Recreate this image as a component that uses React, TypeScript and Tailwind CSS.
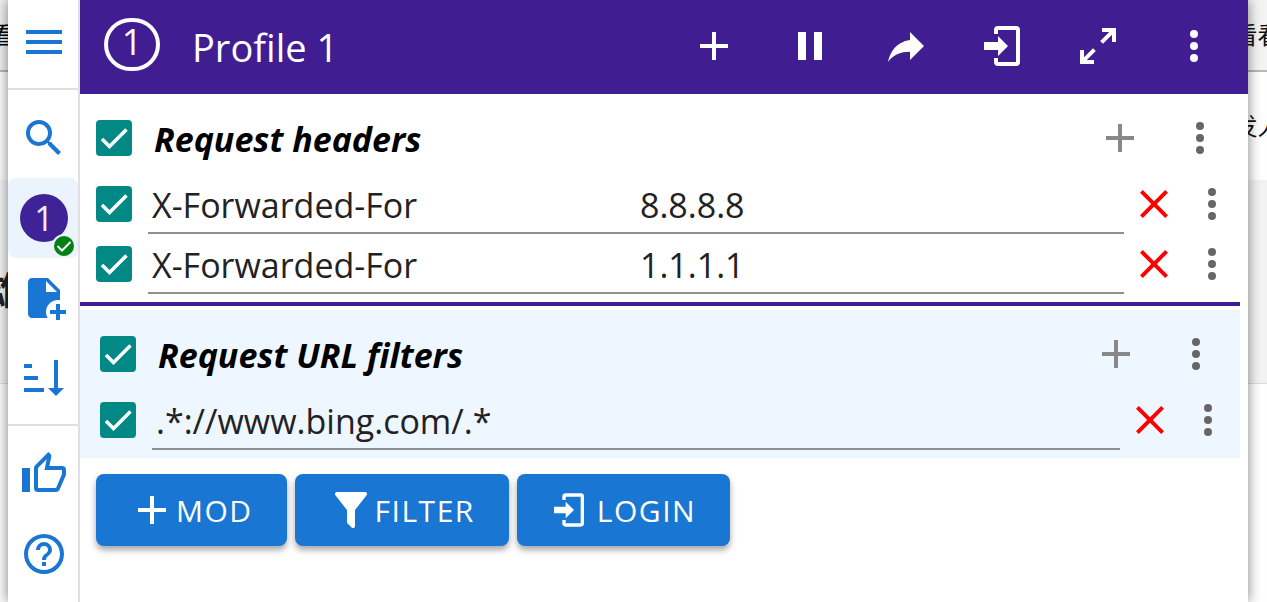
import { useState, type ReactNode } from "react";

const ICONS = {
  menu: "M3 18h18v-2H3v2zm0-5h18v-2H3v2zm0-7v2h18V6H3z",
  search:
    "M9.5 3A6.5 6.5 0 0 1 16 9.5c0 1.61-.59 3.09-1.56 4.23l.27.27h.79l5 5-1.5 1.5-5-5v-.79l-.27-.27A6.516 6.516 0 0 1 9.5 16 6.5 6.5 0 0 1 3 9.5 6.5 6.5 0 0 1 9.5 3m0 2C7 5 5 7 5 9.5S7 14 9.5 14 14 12 14 9.5 12 5 9.5 5z",
  filePlus:
    "M14 2H6c-1.11 0-2 .89-2 2v16c0 1.11.89 2 2 2h7.81c-.53-.91-.81-1.95-.81-3 0-3.31 2.69-6 6-6 .34 0 .67.03 1 .08V8l-6-6m-1 7V3.5L18.5 9H13m10 11h-3v3h-2v-3h-3v-2h3v-3h2v3h3v2z",
  sort: "M19 17h3l-4 4-4-4h3V3h2v14M2 17h10v2H2v-2m4-12v2H2V5h4m-4 6h7v2H2v-2z",
  thumb:
    "M5 9v12H1V9h4m4 12a2 2 0 0 1-2-2V9c0-.55.22-1.05.59-1.41L14.17 1l1.06 1.06c.27.27.44.64.44 1.05l-.03.32L14.69 8H21a2 2 0 0 1 2 2v2c0 .26-.05.5-.14.73l-3.02 7.05C19.54 20.5 18.83 21 18 21H9m0-2h9.03L21 12v-2h-8.79l1.13-5.32L9 9.03V19z",
  help: "M11 18h2v-2h-2v2m1-16A10 10 0 0 0 2 12a10 10 0 0 0 10 10 10 10 0 0 0 10-10A10 10 0 0 0 12 2m0 18c-4.41 0-8-3.59-8-8s3.59-8 8-8 8 3.59 8 8-3.59 8-8 8m0-14a4 4 0 0 0-4 4h2a2 2 0 0 1 2-2 2 2 0 0 1 2 2c0 2-3 1.75-3 5h2c0-2.25 3-2.5 3-5a4 4 0 0 0-4-4z",
  plus: "M19 13h-6v6h-2v-6H5v-2h6V5h2v6h6v2z",
  pause: "M14 19h4V5h-4M6 19h4V5H6v14z",
  share: "M21 12l-7-7v4C7 10 4 15 3 20c2.5-3.5 6-5.1 11-5.1V19l7-7z",
  login:
    "M19 2H10a2 2 0 0 0-2 2v2h2V4h9v16h-9v-2H8v2a2 2 0 0 0 2 2h9a2 2 0 0 0 2-2V4a2 2 0 0 0-2-2zM10 7v3H3v4h7v3l5-5z",
  expand:
    "M10 21v-2H6.41l4.5-4.5-1.41-1.41-4.5 4.5V14H3v7h7m4.5-10.09l4.5-4.5V10h2V3h-7v2h3.59l-4.5 4.5 1.41 1.41z",
  dots: "M12 16a2 2 0 0 1 2 2 2 2 0 0 1-2 2 2 2 0 0 1-2-2 2 2 0 0 1 2-2m0-6a2 2 0 0 1 2 2 2 2 0 0 1-2 2 2 2 0 0 1-2-2 2 2 0 0 1 2-2m0-6a2 2 0 0 1 2 2 2 2 0 0 1-2 2 2 2 0 0 1-2-2 2 2 0 0 1 2-2z",
  close:
    "M19 6.41L17.59 5 12 10.59 6.41 5 5 6.41 10.59 12 5 17.59 6.41 19 12 13.41 17.59 19 19 17.59 13.41 12 19 6.41z",
  filter:
    "M14 12v7.88c.04.3-.06.62-.29.83a.996.996 0 0 1-1.41 0l-2.01-2.01a.989.989 0 0 1-.29-.83V12h-.03L4.21 4.62a1 1 0 0 1 .17-1.4c.19-.14.4-.22.62-.22h14c.22 0 .43.08.62.22a1 1 0 0 1 .17 1.4L14.03 12H14z",
};

function Icon({ d, className = "size-12" }: { d: string; className?: string }) {
  return (
    <svg viewBox="0 0 24 24" fill="currentColor" aria-hidden="true" className={`shrink-0 ${className}`}>
      <path d={d} />
    </svg>
  );
}

function IconButton({ label, d, className = "" }: { label: string; d: string; className?: string }) {
  return (
    <button type="button" aria-label={label} className={`flex shrink-0 items-center justify-center ${className}`}>
      <Icon d={d} />
    </button>
  );
}

function Check({ label }: { label: string }) {
  const [on, setOn] = useState(true);
  return (
    <label className="grid size-9 shrink-0 cursor-pointer place-items-center rounded bg-[#028986] text-white">
      <input
        type="checkbox"
        aria-label={label}
        checked={on}
        onChange={() => setOn(!on)}
        className="col-start-1 row-start-1 size-9 appearance-none rounded"
      />
      {on && (
        <svg viewBox="0 0 36 36" fill="none" aria-hidden="true" className="pointer-events-none col-start-1 row-start-1 size-9">
          <path d="M6 19l7.500 7.500L30.500 9.500" stroke="currentColor" strokeWidth="3.500" />
        </svg>
      )}
    </label>
  );
}

function SectionHead({ title }: { title: string }) {
  return (
    <div className="flex h-18 items-center">
      <Check label={title} />
      <h2 className="ml-[22px] flex-1 pt-0.5 text-[34px] leading-10 font-bold text-black italic">{title}</h2>
      <IconButton label={`Add to ${title}`} d={ICONS.plus} className="w-20 text-[#888]" />
      <IconButton label={`${title} menu`} d={ICONS.dots} className="w-20 text-[#666]" />
    </div>
  );
}

function Row({ label, values }: { label: string; values: string[] }) {
  return (
    <div className="flex h-15 items-center">
      <Check label={`Enable ${label}`} />
      <div className="ml-4 flex h-15 min-w-0 flex-1 border-b-2 border-[#909090]">
        {values.map((value, i) => (
          <input
            key={i}
            type="text"
            aria-label={`${label} ${i === 0 ? "name" : "value"}`}
            defaultValue={value}
            className="min-w-0 flex-1 bg-transparent px-1 pt-1 text-[34px] leading-12 text-[#222] outline-none"
          />
        ))}
      </div>
      <IconButton label={`Delete ${label}`} d={ICONS.close} className="w-15 text-[#f00]" />
      <IconButton label={`${label} menu`} d={ICONS.dots} className="w-14 text-[#666]" />
    </div>
  );
}

function ActionButton({ icon, children }: { icon: ReactNode; children: ReactNode }) {
  return (
    <button
      type="button"
      className="flex h-18 items-center rounded-lg bg-[#1976d2] px-8 text-[30px] leading-10 tracking-wider text-white shadow-[0_4px_6px_rgba(0,0,0,0.35)]"
    >
      {icon}
      <span className="pt-0.5 pr-0.5">{children}</span>
    </button>
  );
}

export default function App() {
  return (
    <div className="flex h-screen overflow-hidden bg-[#f0f0f0] font-['Open_Sans','Noto_Sans_CJK_SC',sans-serif]">
      <aside className="w-2 shrink-0 overflow-hidden">
        <div className="flex h-18 items-center justify-center border-b-2 border-[#b8b8b8] bg-[#f0f0f0] text-[24px] text-black">
          看
        </div>
        <div className="h-27 bg-[#fcfcfc]" />
        <div className="flex h-51 items-center justify-center border-b border-[#ddd] bg-[#f3f3f3] pt-4 text-[38px] font-bold text-[#222]">
          雄
        </div>
        <div className="h-56 bg-[#fcfcfc]" />
      </aside>

      <main className="z-10 flex min-w-0 flex-1 bg-white shadow-[0_0_12px_rgba(0,0,0,0.5)]">
        <nav aria-label="Profiles" className="w-18 shrink-0 border-r-2 border-[#e0e0e0] text-[#1976d2]">
          <div className="flex h-[90px] justify-center border-b-2 border-[#e0e0e0] pb-1 pl-0.5">
            <IconButton label="Menu" d={ICONS.menu} />
          </div>
          <div className="flex flex-col items-center border-b-2 border-[#e0e0e0] pt-2 pb-1.5">
            <IconButton label="Search" d={ICONS.search} className="h-20 pl-0.5" />
            <button
              type="button"
              aria-label="Profile 1"
              className="flex h-20 w-full items-center justify-center rounded-lg bg-[#ebf3fc] pl-0.5"
            >
              <span className="relative flex size-12 items-center justify-center rounded-full bg-[#3f2296] text-[34px] text-[#ecf0fc]">
                1
                <span className="absolute -right-2 -bottom-4 grid size-6 place-items-center rounded-full bg-[#ebf3fc]">
                  <svg viewBox="0 0 24 24" fill="none" aria-hidden="true" className="size-6">
                    <circle cx="12" cy="12" r="10" fill="#008212" />
                    <path d="M5.500 12l4.500 4.500 8.500-8.500" stroke="#fff" strokeWidth="2" />
                  </svg>
                </span>
              </span>
            </button>
            <IconButton label="New profile" d={ICONS.filePlus} className="h-20 pl-0.5" />
            <IconButton label="Sort profiles" d={ICONS.sort} className="h-20 pl-0.5" />
          </div>
          <div className="flex flex-col items-center pt-2">
            <IconButton label="Like" d={ICONS.thumb} className="h-20 pl-0.5" />
            <IconButton label="Help" d={ICONS.help} className="h-20 pl-0.5" />
          </div>
        </nav>

        <div className="min-w-0 flex-1">
          <header className="flex h-[94px] items-center bg-[#401d91] pr-1.5 pb-0.5 pl-6 text-white">
            <span className="mb-1 flex h-[53px] w-14 items-center justify-center rounded-full border-4 border-white pb-1 text-[36px] leading-none">
              1
            </span>
            <h1 className="ml-8 flex-1 pt-0.5 text-[38px] leading-12">Profile 1</h1>
            <div className="flex">
              <IconButton label="Add" d={ICONS.plus} className="w-24" />
              <IconButton label="Pause" d={ICONS.pause} className="w-24" />
              <IconButton label="Share" d={ICONS.share} className="w-24" />
              <IconButton label="Log in" d={ICONS.login} className="w-24" />
              <IconButton label="Expand" d={ICONS.expand} className="w-24" />
              <IconButton label="More" d={ICONS.dots} className="w-24" />
            </div>
          </header>

          <div className="mr-2">
            <section className="border-b-4 border-[#401d91] pt-2 pb-2 pl-4">
              <SectionHead title="Request headers" />
              <Row label="X-Forwarded-For" values={["X-Forwarded-For", "8.8.8.8"]} />
              <Row label="X-Forwarded-For" values={["X-Forwarded-For", "1.1.1.1"]} />
            </section>
            <section className="mt-1 bg-[#eef6ff] pt-2 pr-1 pb-2 pl-5">
              <SectionHead title="Request URL filters" />
              <Row label="URL filter" values={[".*://www.bing.com/.*"]} />
            </section>
          </div>

          <div className="flex gap-2 p-4">
            <ActionButton icon={<Icon d={ICONS.plus} />}>MOD</ActionButton>
            <ActionButton icon={<Icon d={ICONS.filter} />}>FILTER</ActionButton>
            <ActionButton icon={<Icon d={ICONS.login} className="mr-2 size-10" />}>LOGIN</ActionButton>
          </div>
        </div>
      </main>

      <aside className="w-[19px] shrink-0 overflow-hidden text-[24px] whitespace-nowrap text-[#111]">
        <div className="flex h-18 items-center justify-center border-b-2 border-[#b8b8b8] bg-[#f4f4f4]">看看</div>
        <div className="flex h-27 items-center justify-center bg-white">发人</div>
        <div className="h-51 border-b border-[#ddd] bg-[#f3f3f3]" />
        <div className="h-56 bg-white" />
      </aside>
    </div>
  );
}
